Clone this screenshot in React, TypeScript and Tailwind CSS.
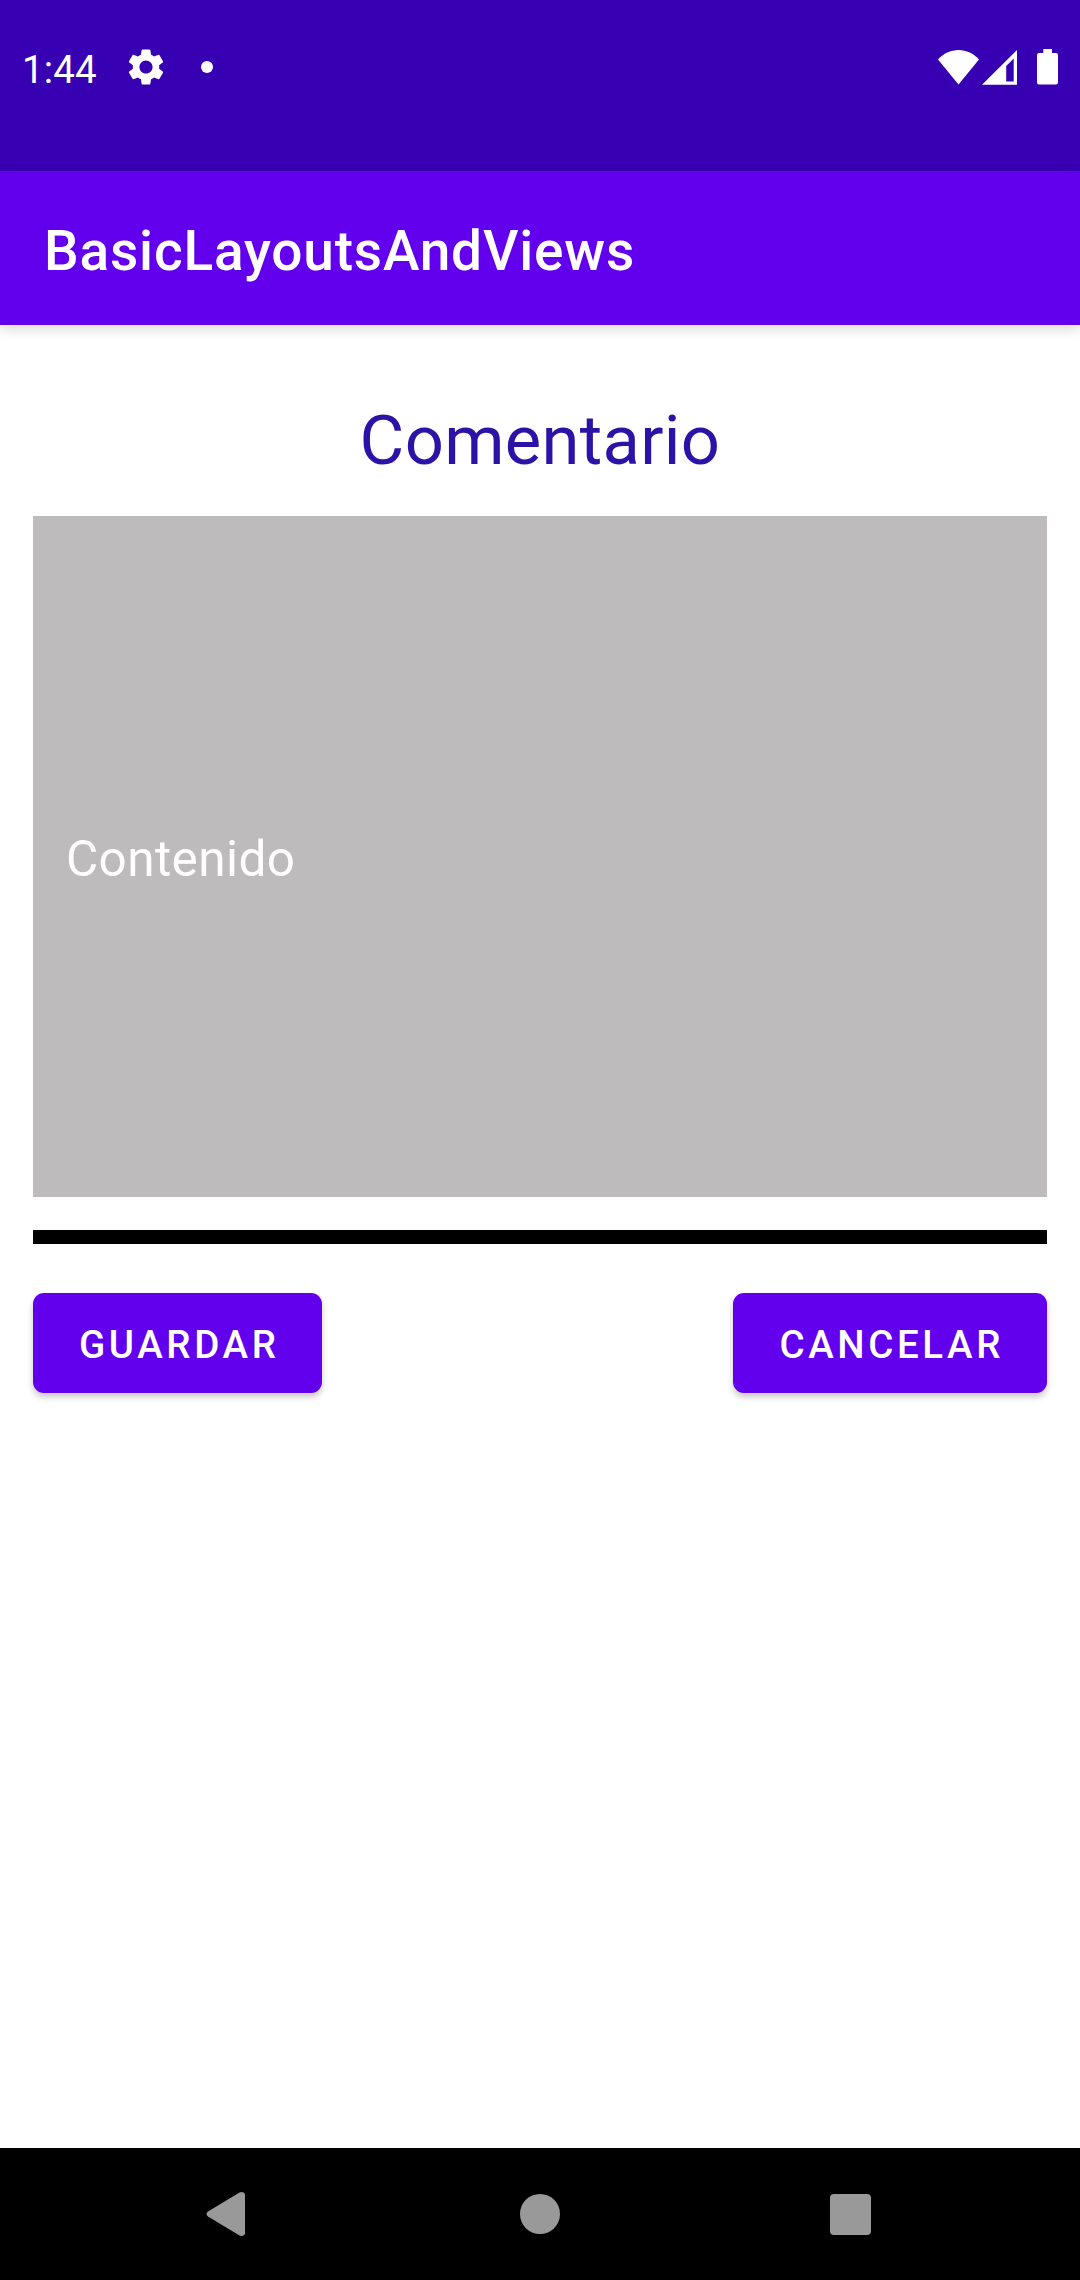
function StatusBar() {
  return (
    <div className="flex h-[171px] items-start justify-between bg-[#3700b3] text-white">
      <div className="flex pl-[22px] pt-[45px]">
        <span className="mt-px h-[48px] w-[76px] whitespace-nowrap text-[38.5px] leading-[48px] tracking-[0.15px]">1:44</span>
        <svg className="ml-[26px] h-[44px] w-[44px]" viewBox="0 0 24 24" fill="currentColor">
          <path d="M19.14 12.94c.04-.3.06-.61.06-.94 0-.32-.02-.64-.07-.94l2.03-1.58c.18-.14.23-.41.12-.61l-1.92-3.32c-.12-.22-.37-.29-.59-.22l-2.39.96c-.5-.38-1.03-.7-1.62-.94l-.36-2.54c-.04-.24-.24-.41-.48-.41h-3.84c-.24 0-.43.17-.47.41l-.36 2.54c-.59.24-1.13.57-1.62.94l-2.39-.96c-.22-.08-.47 0-.59.22L2.740 8.870c-.12.21-.08.47.12.61l2.03 1.58c-.05.3-.09.63-.09.94s.02.64.07.94l-2.03 1.58c-.18.14-.23.41-.12.61l1.92 3.32c.12.22.37.29.59.22l2.39-.96c.5.38 1.03.7 1.62.94l.36 2.54c.05.24.24.41.48.41h3.84c.24 0 .44-.17.47-.41l.36-2.54c.59-.24 1.13-.56 1.62-.94l2.39.96c.22.08.47 0 .59-.22l1.92-3.32c.12-.22.07-.47-.12-.61l-2.01-1.58zM12 15.600c-1.980 0-3.600-1.620-3.600-3.600s1.620-3.600 3.600-3.600 3.600 1.620 3.600 3.600-1.620 3.600-3.600 3.600z" />
        </svg>
        <span className="ml-[33px] mt-4 size-3 rounded-full bg-white" />
      </div>
      <div className="flex pr-[22px] pt-[49px]">
        <svg className="h-[36px] w-[41px]" viewBox="0 0 41 36" fill="currentColor">
          <path d="M0 10.4C5.500 4.500 12.500 1 20.500 1S35.500 4.500 41 10.400L20.500 35.500Z" />
        </svg>
        <svg className="ml-[3px] h-[36px] w-[35px]" viewBox="0 0 35 36" fill="currentColor" fillRule="evenodd">
          <path d="M35 1V35.700H0ZM31.700 9.500L24.200 17V32.500H31.700Z" />
        </svg>
        <svg className="ml-[20px] h-[36px] w-[21px]" viewBox="0 0 21 36" fill="currentColor">
          <path d="M6.300 0H15V4H19Q21 4 21 6V33.500Q21 35.500 19 35.500H2Q0 35.500 0 33.500V6Q0 4 2 4H6.300Z" />
        </svg>
      </div>
    </div>
  );
}

function ActionButton({ label }: { label: string }) {
  return (
    <button className="h-[100px] whitespace-nowrap rounded-[11px] bg-[#6200ee] pl-[46px] pr-[43px] pt-[3px] text-[38.5px] font-medium leading-[45px] tracking-[3.6px] text-white shadow-[0_4px_6px_rgba(0,0,0,0.22)]">
      {label}
    </button>
  );
}

export default function App() {
  return (
    <div className="flex h-[2280px] w-[1080px] flex-col overflow-hidden bg-white font-['Roboto',sans-serif]">
      <StatusBar />
      <header className="flex h-[154px] items-center bg-[#6200ee] pl-[44px] pt-[6px] shadow-[0_4px_12px_rgba(0,0,0,0.15)]">
        <h1 className="whitespace-nowrap text-[55px] font-medium leading-[64px] text-white tracking-[0.8px]">BasicLayoutsAndViews</h1>
      </header>
      <main className="flex flex-1 flex-col px-[33px] pt-[73px]">
        <h2 className="h-[118px] text-center text-[68.75px] leading-[86px] text-[#2c12a6] tracking-[0.3px]">Comentario</h2>
        <div className="flex h-[681px] items-center bg-[#bdbbbc] px-[33px] pt-[5px] text-[49.5px] leading-[58px] text-white tracking-[0.4px]">
          Contenido
        </div>
        <div className="mt-[33px] h-[14px] bg-black" />
        <div className="mt-[49px] flex justify-between">
          <ActionButton label="GUARDAR" />
          <ActionButton label="CANCELAR" />
        </div>
      </main>
      <nav className="flex h-[132px] items-center bg-black text-[#999999]">
        <svg className="ml-[206px] h-[46px] w-[40px]" viewBox="0 0 40 46" fill="currentColor">
          <path d="M2 20.500L33.500 1.500Q37 0 39 3V43Q37 46 33.500 44.500L2 25.500Q-1 23 2 20.500Z" />
        </svg>
        <span className="ml-[274px] size-[40px] rounded-full bg-[#999999]" />
        <span className="ml-[270px] mt-px size-[41px] rounded-[4px] bg-[#999999]" />
      </nav>
    </div>
  );
}
